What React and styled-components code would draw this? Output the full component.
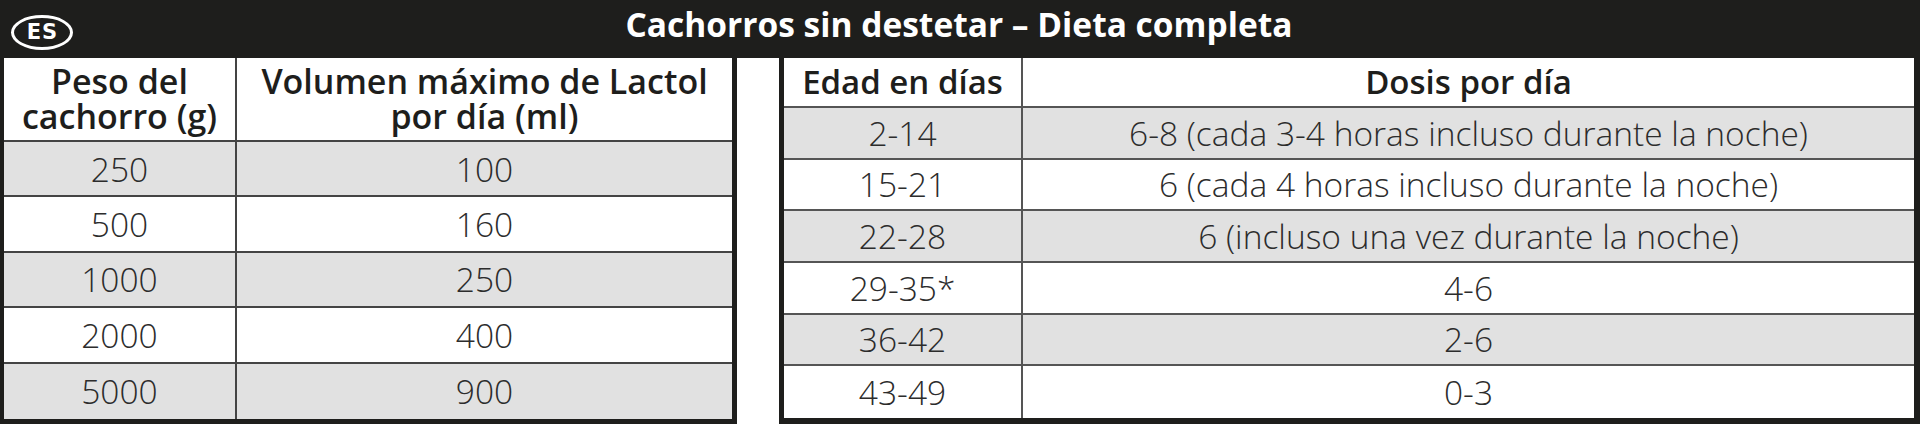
import React from 'react';
import styled, { createGlobalStyle } from 'styled-components';

const Global = createGlobalStyle`
  html, body { margin: 0; padding: 0; background: #1e1e1c; }
  body { font-family: "Open Sans", "Noto Sans", sans-serif; }
`;

const Frame = styled.div`
  width: 1920px;
  height: 424px;
  box-sizing: border-box;
  background: #1e1e1c;
  padding: 0 6px 0 4px;
  display: flex;
  flex-direction: column;
`;

const TitleBar = styled.header`
  height: 58px;
  flex: none;
  display: grid;
  grid-template-columns: 1fr auto 1fr;
  align-items: start;
`;

const Badge = styled.div`
  justify-self: start;
  margin: 15px 0 0 7px;
  width: 62px;
  height: 35px;
  box-sizing: border-box;
  border: 3px solid #fff;
  border-radius: 50%;
  display: flex;
  align-items: center;
  justify-content: center;
  padding-left: 1px;
  color: #fff;
  font-family: "DejaVu Sans", "Open Sans", sans-serif;
  font-weight: 700;
  font-size: 21px;
  line-height: 1;
  letter-spacing: 1px;
`;

const Title = styled.h1`
  margin: 8px 0 0;
  color: #fff;
  font-weight: 700;
  font-size: 33.5px;
  line-height: 1;
  white-space: nowrap;
`;

const Body = styled.div`
  flex: 1;
  display: flex;
  gap: 42px;
  background: #fff;
`;

const Table = styled.div`
  display: grid;
  box-sizing: border-box;
  width: ${(p) => p.$width}px;
  grid-template-columns: ${(p) => p.$cols};
  grid-template-rows: ${(p) => p.$rows};
  border-bottom: ${(p) => p.$bottom}px solid #1e1e1c;
  border-right: ${(p) => (p.$side === 'right' ? '5px solid #1e1e1c' : 'none')};
  border-left: ${(p) => (p.$side === 'left' ? '5px solid #1e1e1c' : 'none')};
`;

const Cell = styled.div`
  display: flex;
  flex-direction: column;
  align-items: center;
  justify-content: center;
  text-align: center;
  background: ${(p) => (p.$shade ? '#e1e1e1' : '#fff')};
  border-bottom: ${(p) => (p.$last ? 'none' : `2px solid ${p.$line}`)};
  border-right: ${(p) => (p.$first ? `2px solid ${p.$line}` : 'none')};
  color: ${(p) => (p.$head ? '#1e1e1c' : '#2c2c2c')};
  font-weight: ${(p) => (p.$head ? 600 : 300)};
  font-size: ${(p) => p.$size}px;
  line-height: ${(p) => p.$lh}px;
  white-space: nowrap;
`;

const HeadLine = styled.span`
  display: block;
  line-height: 35px;
`;

const weightRows = [
  ['250', '100'],
  ['500', '160'],
  ['1000', '250'],
  ['2000', '400'],
  ['5000', '900'],
];

const doseRows = [
  ['2-14', '6-8 (cada 3-4 horas incluso durante la noche)'],
  ['15-21', '6 (cada 4 horas incluso durante la noche)'],
  ['22-28', '6 (incluso una vez durante la noche)'],
  ['29-35*', '4-6'],
  ['36-42', '2-6'],
  ['43-49', '0-3'],
];

function DataTable({ width, cols, rows, bottom, side, line, head, data, headSize, headLh, bodySize }) {
  return (
    <Table $width={width} $cols={cols} $rows={rows} $bottom={bottom} $side={side}>
      {head.map((h, i) => (
        <Cell key={`h${i}`} $head $first={i === 0} $line={line} $size={headSize} $lh={headLh}>
          {Array.isArray(h) ? h.map((t) => <HeadLine key={t}>{t}</HeadLine>) : h}
        </Cell>
      ))}
      {data.map((row, r) =>
        row.map((v, c) => (
          <Cell
            key={`${r}-${c}`}
            $first={c === 0}
            $shade={r % 2 === 0}
            $last={r === data.length - 1}
            $line={line}
            $size={bodySize}
            $lh={40}
          >
            {v}
          </Cell>
        ))
      )}
    </Table>
  );
}

export default function App() {
  return (
    <>
      <Global />
      <Frame>
        <TitleBar>
          <Badge>ES</Badge>
          <Title>Cachorros sin destetar – Dieta completa</Title>
          <span />
        </TitleBar>
        <Body>
          <DataTable
            width={733}
            cols="233px 1fr"
            rows="84px repeat(5, 1fr)"
            bottom={5}
            side="right"
            line="#444"
            headSize={34}
            headLh={35}
            bodySize={33.5}
            head={[
              ['Peso del', 'cachorro (g)'],
              ['Volumen máximo de Lactol', 'por día (ml)'],
            ]}
            data={weightRows}
          />
          <DataTable
            width={1135}
            cols="239px 1fr"
            rows="50px repeat(6, 1fr)"
            bottom={6}
            side="left"
            line="#555"
            headSize={33}
            headLh={40}
            bodySize={33.5}
            head={['Edad en días', 'Dosis por día']}
            data={doseRows}
          />
        </Body>
      </Frame>
    </>
  );
}
